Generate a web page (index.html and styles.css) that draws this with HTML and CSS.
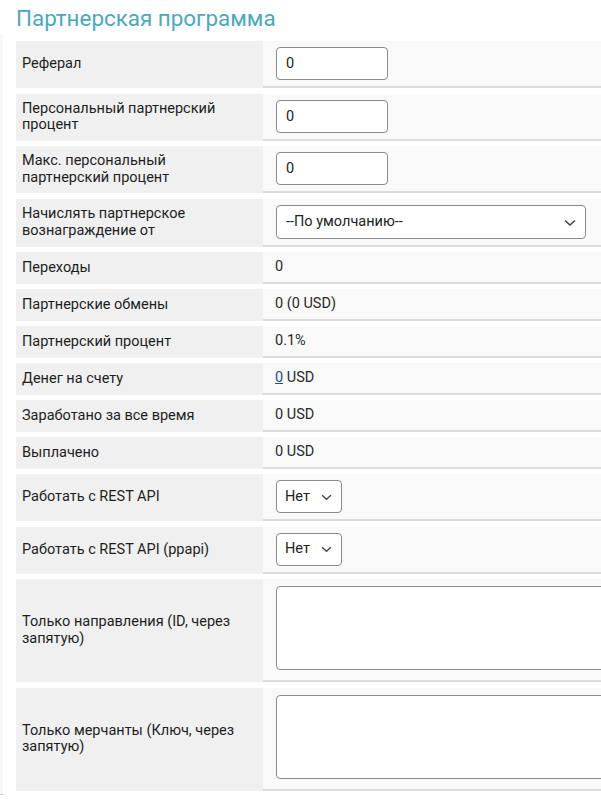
FILE: index.html
```html
<!DOCTYPE html>
<html lang="ru">
<head>
<meta charset="utf-8">
<title>Партнерская программа</title>
<link rel="stylesheet" href="styles.css">
</head>
<body>
<div class="page">
  <div class="edge"></div>
  <main class="main">
    <h1 class="title">Партнерская программа</h1>
    <div class="grid">
      <div class="lbl">Реферал</div>
      <div class="val"><input class="inp" type="text" value="0"></div>

      <div class="lbl">Персональный партнерский процент</div>
      <div class="val"><input class="inp" type="text" value="0"></div>

      <div class="lbl">Макс. персональный партнерский процент</div>
      <div class="val"><input class="inp" type="text" value="0"></div>

      <div class="lbl">Начислять партнерское вознаграждение от</div>
      <div class="val">
        <span class="sel sel-wide">--По умолчанию--
          <svg class="chev" width="12" height="8" viewBox="0 0 12 8"><path d="M1 1.5 L6 6 L11 1.5" fill="none" stroke="#444" stroke-width="1.6"/></svg>
        </span>
      </div>

      <div class="lbl">Переходы</div>
      <div class="val txt">0</div>

      <div class="lbl">Партнерские обмены</div>
      <div class="val txt">0 (0 USD)</div>

      <div class="lbl">Партнерский процент</div>
      <div class="val txt">0.1%</div>

      <div class="lbl">Денег на счету</div>
      <div class="val txt"><a class="lnk" href="#">0</a>&nbsp;USD</div>

      <div class="lbl">Заработано за все время</div>
      <div class="val txt">0 USD</div>

      <div class="lbl">Выплачено</div>
      <div class="val txt">0 USD</div>

      <div class="lbl">Работать с REST API</div>
      <div class="val">
        <span class="sel sel-small">Нет
          <svg class="chev" width="11" height="7" viewBox="0 0 12 8"><path d="M1 1.5 L6 6 L11 1.5" fill="none" stroke="#444" stroke-width="1.6"/></svg>
        </span>
      </div>

      <div class="lbl">Работать с REST API (ppapi)</div>
      <div class="val">
        <span class="sel sel-small">Нет
          <svg class="chev" width="11" height="7" viewBox="0 0 12 8"><path d="M1 1.5 L6 6 L11 1.5" fill="none" stroke="#444" stroke-width="1.6"/></svg>
        </span>
      </div>

      <div class="lbl">Только направления (ID, через запятую)</div>
      <div class="val val-area"><textarea class="area"></textarea></div>

      <div class="lbl">Только мерчанты (Ключ, через запятую)</div>
      <div class="val val-area"><textarea class="area"></textarea></div>
    </div>
  </main>
</div>
</body>
</html>
```

FILE: styles.css
```css
html, body {
  margin: 0;
  padding: 0;
  background: #fff;
  overflow: hidden;
}

body {
  font-family: Roboto, "Noto Sans", Arial, sans-serif;
  font-size: 14.5px;
  color: #1e1e1e;
}

.page {
  display: flex;
  width: 760px;
}

.edge {
  width: 3px;
  margin-top: 34px;
  background: #f7f7f7;
  border-bottom: 1px solid #ccc;
  height: 760px;
}

.main {
  margin-left: 13px;
  flex: 1;
}

.title {
  margin: 0;
  padding-top: 4px;
  height: 37px;
  font-size: 22.4px;
  font-weight: 400;
  color: #4aa9be;
  line-height: 28px;
}

.grid {
  display: grid;
  grid-template-columns: 247px 1fr;
  row-gap: 5.5px;
}

.lbl {
  background: #f0f0f0;
  padding: 6px 16px 6px 6px;
  line-height: 16.5px;
  display: flex;
  align-items: center;
  color: #1e1e1e;
}

.val {
  background: #f9f9f9;
  border-bottom: 2px solid #dcdcdc;
  padding: 6px 13px;
  display: flex;
  align-items: center;
  line-height: 17.5px;
  color: #2a2a2a;
}

.val.txt {
  padding-left: 12px;
}

.val-area {
  padding-top: 7px;
  padding-bottom: 10px;
}

.lnk {
  color: #1c4f86;
  text-decoration: underline;
}

.inp {
  box-sizing: border-box;
  width: 112px;
  height: 33px;
  border: 1px solid #8a8a8a;
  border-radius: 4px;
  background: #fff;
  padding: 0 9px;
  font-family: Roboto, "Noto Sans", Arial, sans-serif;
  font-size: 14.5px;
  color: #222;
  margin: 0;
}

.sel {
  position: relative;
  box-sizing: border-box;
  display: flex;
  align-items: center;
  border: 1px solid #8a8a8a;
  border-radius: 4px;
  background: #fff;
  color: #222;
  font-size: 14.5px;
}

.sel-wide {
  width: 310px;
  height: 34px;
  padding-left: 9px;
}

.sel-small {
  width: 66px;
  height: 33px;
  padding-left: 8px;
}

.chev {
  position: absolute;
  right: 9px;
  top: 50%;
  margin-top: -3px;
}

.area {
  box-sizing: border-box;
  width: 400px;
  height: 84px;
  border: 1px solid #8a8a8a;
  border-radius: 4px;
  background: #fff;
  resize: none;
  margin: 0;
  display: block;
}
```
